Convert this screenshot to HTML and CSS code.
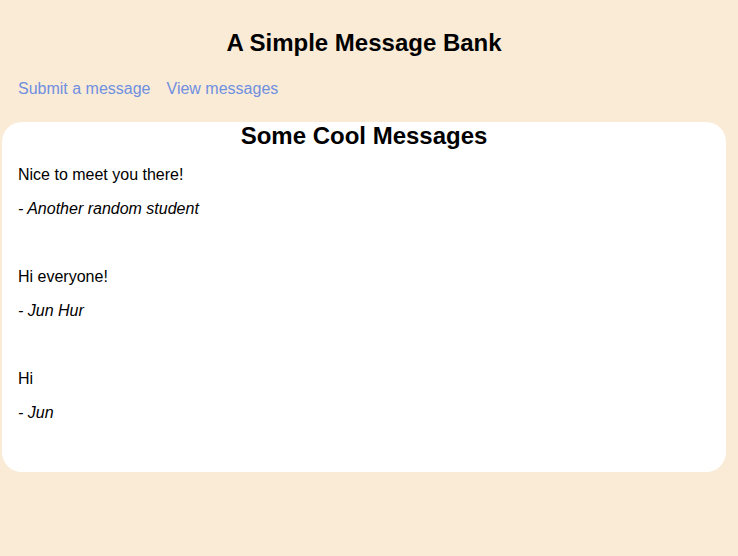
FILE: index.html
```html
<!DOCTYPE html>
<html>
<head>
<meta charset="utf-8">
<title>A Simple Message Bank</title>
<link rel="stylesheet" href="styles.css">
</head>
<body>
<div class="page">
  <header class="site-header">
    <h1 class="site-title">A Simple Message Bank</h1>
    <nav class="nav">
      <a class="nav-link" href="#">Submit a message</a>
      <a class="nav-link" href="#">View messages</a>
    </nav>
  </header>
  <main class="card">
    <h2 class="card-title">Some Cool Messages</h2>
    <div class="message">
      <p class="message-text">Nice to meet you there!</p>
      <p class="message-author">- Another random student</p>
    </div>
    <div class="message">
      <p class="message-text">Hi everyone!</p>
      <p class="message-author">- Jun Hur</p>
    </div>
    <div class="message">
      <p class="message-text">Hi</p>
      <p class="message-author">- Jun</p>
    </div>
  </main>
</div>
</body>
</html>
```
FILE: styles.css
```css
html, body {
  margin: 0;
  padding: 0;
}
body {
  background: #faebd7;
  font-family: "Liberation Sans", Arial, sans-serif;
  font-size: 16px;
  color: #000;
  min-height: 556px;
}
.page {
  width: 724px;
  margin-left: 2px;
}
.site-header {
  padding: 29px 16px 0;
}
.site-title {
  margin: 0;
  font-size: 24px;
  font-weight: bold;
  text-align: center;
}
.nav {
  display: flex;
  gap: 16px;
  margin-top: 23px;
}
.nav-link {
  color: #6f8fe0;
  text-decoration: none;
}
.card {
  margin-top: 24px;
  box-sizing: border-box;
  background: #fff;
  border-radius: 20px;
  padding: 0 16px 16px;
}
.card-title {
  margin: 0;
  font-size: 24px;
  font-weight: bold;
  text-align: center;
}
.message {
  padding-bottom: 18px;
}
.message p {
  margin: 16px 0;
}
.message-author {
  font-style: italic;
}
```
